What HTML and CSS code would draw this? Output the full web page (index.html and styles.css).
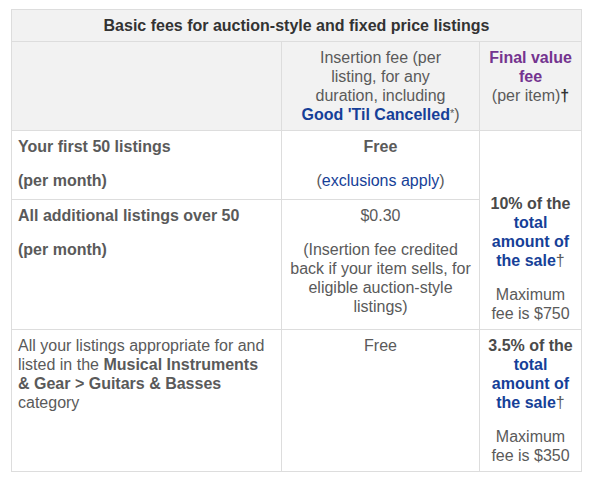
FILE: index.html
```html
<!DOCTYPE html>
<html lang="en">
<head>
<meta charset="utf-8">
<title>Basic fees</title>
<link rel="stylesheet" href="styles.css">
</head>
<body>
<table class="fees">
  <colgroup>
    <col class="c-label">
    <col class="c-insert">
    <col class="c-final">
  </colgroup>
  <thead>
    <tr>
      <th colspan="3" class="title">Basic fees for auction-style and fixed price listings</th>
    </tr>
    <tr class="head">
      <th class="blank"></th>
      <th class="h-insert">Insertion fee (per listing, for any duration, including <a class="lk strong">Good 'Til Cancelled</a><span class="ast">*</span>)</th>
      <th class="h-final"><span class="purple">Final value<br>fee</span><br>(per item)<b class="dag-b">†</b></th>
    </tr>
  </thead>
  <tbody>
    <tr class="row-a">
      <td class="label"><p><b>Your first 50 listings</b></p><p><b>(per month)</b></p></td>
      <td class="mid"><p><b>Free</b></p><p>(<a class="lk">exclusions apply</a>)</p></td>
      <td class="fv fv-bottom" rowspan="2">
        <p><b>10% of the <a class="lk">total amount of the sale</a></b>†</p>
        <p>Maximum fee is $750</p>
      </td>
    </tr>
    <tr class="row-b">
      <td class="label"><p><b>All additional listings over 50</b></p><p><b>(per month)</b></p></td>
      <td class="mid"><p>$0.30</p><p>(Insertion fee credited back if your item sells, for eligible auction-style listings)</p></td>
    </tr>
    <tr class="row-c">
      <td class="label">All your listings appropriate for and listed in the <b>Musical Instruments &amp; Gear &gt; Guitars &amp; Basses</b> category</td>
      <td class="mid">Free</td>
      <td class="fv">
        <p><b>3.5% of the <a class="lk">total amount of the sale</a></b>†</p>
        <p>Maximum fee is $350</p>
      </td>
    </tr>
  </tbody>
</table>
</body>
</html>
```

FILE: styles.css
```css
html, body {
  margin: 0;
  padding: 0;
  background: #ffffff;
}

body {
  font-family: "Liberation Sans", Arial, sans-serif;
  font-size: 16px;
  line-height: 19px;
  color: #5a5a5a;
}

.fees {
  border-collapse: collapse;
  table-layout: fixed;
  width: 570px;
  margin: 9px 0 0 11px;
}

.c-label { width: 270px; }
.c-insert { width: 198px; }
.c-final { width: 102px; }

.fees th,
.fees td {
  border: 1px solid #dddddd;
  padding: 6px;
  vertical-align: top;
}

.fees p {
  margin: 0;
}

.fees p + p {
  margin-top: 15px;
}

.title {
  background: #f2f2f2;
  color: #333333;
  font-weight: bold;
  text-align: center;
}

.head th {
  background: #f2f2f2;
  font-weight: normal;
  text-align: center;
}

.h-insert {
  padding-left: 17px !important;
  padding-right: 17px !important;
}

.lk {
  color: #163f98;
  text-decoration: none;
}

.strong {
  font-weight: bold;
}

.ast {
  font-size: 11px;
  vertical-align: 3px;
  line-height: 0;
}

.purple {
  color: #74348f;
  font-weight: bold;
}

.dag-b {
  color: #333333;
}

.label {
  text-align: left;
  padding-right: 9px !important;
}

.mid {
  text-align: center;
}

.fv {
  text-align: center;
}

.fv b {
  color: #4a4a4a;
}

.fv b .lk {
  color: #163f98;
}

.fv-bottom {
  vertical-align: bottom !important;
}

.row-a { height: 69px; }
.row-b { height: 130px; }
```
